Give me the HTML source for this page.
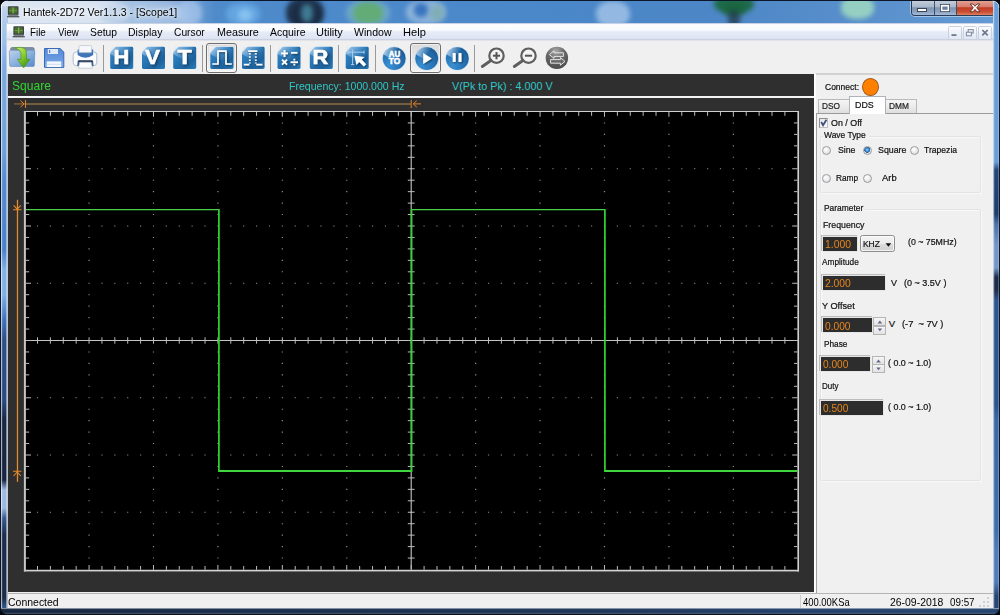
<!DOCTYPE html>
<html lang="en">
<head>
<meta charset="utf-8">
<title>Hantek-2D72 Ver1.1.3 - [Scope1]</title>
<style>
html,body{margin:0;padding:0;}
body{width:1000px;height:615px;overflow:hidden;position:relative;background:#4a7ab5;font-family:"Liberation Sans",sans-serif;}
.t{position:absolute;white-space:pre;transform-origin:0 50%;}
.abs{position:absolute;}
svg{position:absolute;left:0;top:0;overflow:visible;}

#win{position:absolute;left:0;top:0;width:1000px;height:615px;overflow:hidden;
 background:
  linear-gradient(90deg,#0d1a2c 0,#0d1a2c 1px,rgba(255,255,255,.75) 1px,rgba(255,255,255,.75) 2px,rgba(0,0,0,0) 2.5px) 0 0/8px 100% no-repeat,
  linear-gradient(90deg,#c3d3e6 0,#b4cbe6 90px,#8fb2dd 170px,#4f8bcb 215px,#4a88ca 520px,#4c86c6 700px,#5a90cc 880px,#649ad4 1000px);
}
#glassblobs{position:absolute;left:0;top:0;width:1000px;height:24px;overflow:hidden;}
#glassblobs i{position:absolute;display:block;border-radius:45%;filter:blur(2.6px);}
#titlebar{position:absolute;left:0;top:0;width:1000px;height:23px;}
#topline{position:absolute;left:0;top:0;width:1000px;height:1px;background:#0d1626;}
#topline2{position:absolute;left:6px;top:1px;width:988px;height:1px;background:rgba(255,255,255,.35);}
#lborder{position:absolute;left:0;top:6px;width:8px;height:609px;
 background:
  linear-gradient(90deg,#0c1626 0,#0c1626 .8px,rgba(255,255,255,.7) 1px,rgba(255,255,255,.55) 2px,rgba(255,255,255,0) 2.6px,rgba(255,255,255,0) 8px),
  linear-gradient(180deg,#c2d4e8 0,#b0cbea 14px,#9cc0ea 34px,#7eabe0 60px,#6fa0dc 144px,#558cd0 174px,#4a82ca 244px,#82b2e8 264px,#7fb0ea 289px,#4173bb 314px,#2d5088 334px,#2a4a80 394px,#182844 414px,#172640 474px,#9fbbe3 484px,#9cb8e0 502px,#3a5a90 512px,#1c2e4c 529px,#1b2c48 592px,#35609c 604px);}
#rborder{position:absolute;left:993px;top:0;width:7px;height:615px;
 background:
  linear-gradient(90deg,rgba(225,232,242,.95) 0,rgba(255,255,255,.35) 1px,rgba(255,255,255,0) 1.8px,rgba(255,255,255,0) 5px,rgba(255,255,255,.4) 5.8px,rgba(12,22,38,1) 6.4px,#0a1220 7px),
  linear-gradient(180deg,#6a9cd6 0,#6a9cd6 162px,#24467a 170px,#1e3c6c 214px,#4a70a8 224px,#7394c6 245px,#7394c6 268px,#1e2e4a 277px,#1e2e4a 290px,#2c548e 300px,#2c548e 405px,#3a68a6 420px,#3e6eae 530px,#4f7cb8 550px,#4f7cb8 582px,#284674 596px);}
#bborder{position:absolute;left:0;top:608px;width:1000px;height:7px;
 background:
  linear-gradient(180deg,rgba(200,208,220,.95) 0,rgba(255,255,255,.2) 1px,rgba(255,255,255,0) 1.6px,rgba(255,255,255,0) 4.4px,rgba(255,255,255,.3) 5.2px,#0b1424 6px,#070d18 7px),
  linear-gradient(90deg,#182840 0,#1b3050 300px,#1f3759 600px,#25426c 800px,#264670 1000px);}
#ledge{position:absolute;left:5.6px;top:23px;width:2.4px;height:585px;background:linear-gradient(90deg,rgba(255,255,255,.25) 0,rgba(215,220,228,.9) 1.2px,rgba(150,158,170,1) 2.4px);}
#cornerTL{position:absolute;left:0;top:0;width:8px;height:8px;background:radial-gradient(circle at 7.2px 7.2px,rgba(0,0,0,0) 0,rgba(0,0,0,0) 5.6px,rgba(255,255,255,.8) 6.1px,#0c1626 6.8px,#05080e 7.4px);}
#cornerTR{position:absolute;left:992px;top:0;width:8px;height:8px;background:radial-gradient(circle at .8px 7.2px,rgba(0,0,0,0) 0,rgba(0,0,0,0) 5.6px,rgba(255,255,255,.7) 6.1px,#0c1626 6.8px,#05080e 7.4px);}
#cornerBL{position:absolute;left:0;top:607px;width:8px;height:8px;background:radial-gradient(circle at 7.2px .8px,rgba(0,0,0,0) 0,rgba(0,0,0,0) 5.8px,#0c1626 6.6px,#05080e 7.4px);}
#cornerBR{position:absolute;left:992px;top:607px;width:8px;height:8px;background:radial-gradient(circle at .8px .8px,rgba(0,0,0,0) 0,rgba(0,0,0,0) 5.8px,#0c1626 6.6px,#05080e 7.4px);}
#client{position:absolute;left:8px;top:23px;width:985px;height:585px;background:#f0f0f0;}
#menubar{position:absolute;left:7px;top:23px;width:986px;height:17.6px;
 background:linear-gradient(180deg,#9fb4d0 0,#dfe6f1 .8px,#fdfdfe 1.6px,#f8fafd 7px,#e6ebf7 9px,#e0e6f5 14px,#dce2f1 15.8px,#c9cfdb 16.6px,#e4e6ea 17.6px);}
#menubar .mi{position:absolute;}
.capbtn{position:absolute;top:0;height:16px;box-sizing:border-box;}
#statusbar{position:absolute;left:8px;top:593px;width:985px;height:15px;background:#f0f0f0;border-top:1px solid #b4b4b4;box-sizing:border-box;}
.mdib{position:absolute;top:25.5px;width:14px;height:14px;box-sizing:border-box;border:1px solid #c9d0de;border-radius:1.5px;
 background:linear-gradient(180deg,#fbfcfe 0,#eef1f8 50%,#e2e7f3 100%);}

#toolbar{position:absolute;left:7px;top:40.5px;width:986px;height:33.5px;background:#f0f0f0;}
#toolbar .sep{position:absolute;top:4px;width:1px;height:27px;background:#9a9a9a;}
#toolbar .pressed{position:absolute;top:2.5px;height:29.5px;box-sizing:border-box;border:1px solid #6f6f6f;border-radius:3px;background:linear-gradient(180deg,#dcdcdc 0,#e8e8e8 60%,#f2f2f2 100%);box-shadow:inset 0 0 0 1px rgba(255,255,255,.5);}

#scope{position:absolute;left:8px;top:74px;width:806px;height:518px;background:#2f2f2f;overflow:hidden;}
#scopehead{position:absolute;left:0;top:0;width:807px;height:22px;}
#scopeline{position:absolute;left:0;top:22.3px;width:807px;height:2px;background:#f4f4f4;}

#panel{position:absolute;left:814px;top:74px;width:179px;height:519px;background:#f0f0f0;}
#panel .topl{position:absolute;left:2px;top:-0.8px;width:177px;height:1.5px;background:#d2d2d2;}
#panel .vsep{position:absolute;left:0;top:0;width:2.6px;height:100%;background:linear-gradient(90deg,#ffffff 0,#fcfcfc 1.4px,#f0f0f0 2.4px);}
#panel .t{-webkit-text-stroke:.22px currentColor;}
.tab{position:absolute;box-sizing:border-box;border:1px solid #b9b9b9;border-bottom:none;background:linear-gradient(180deg,#f4f4f4 0,#ececec 50%,#dedede 100%);}
.tab.sel{background:#fff;border-color:#aeb3bb;z-index:2;}
#tabbody{position:absolute;left:2px;top:39px;width:177px;height:480px;border-top:1px solid #9a9a9a;border-left:1px solid #a0a0a0;box-sizing:border-box;background:#f0f0f0;}
.grp{position:absolute;box-sizing:border-box;border:1px solid #e3e3e3;border-radius:2px;box-shadow:inset 1px 1px 0 #f8f8f8, 1px 1px 0 #f8f8f8;}
.dk{position:absolute;box-sizing:border-box;background:#2d2d2d;box-shadow:0 0 0 1px #e6e6e6,-1px -1px 0 1px #bdbdbd;}
.radio{position:absolute;width:9px;height:9px;border-radius:50%;box-sizing:border-box;border:1px solid #9a9da2;background:radial-gradient(circle at 40% 35%,#ffffff 0,#eeeeee 45%,#cfcfcf 100%);}
.radio.on{background:radial-gradient(circle at 45% 40%,#9fd4f5 0,#2b78c2 38%,#1f5ea3 48%,#e8e8e8 56%,#d8d8d8 100%);}
.spin{position:absolute;box-sizing:border-box;width:13px;border:1px solid #b5b5b5;background:linear-gradient(180deg,#f6f6f6,#e2e2e2);}
.combo{position:absolute;box-sizing:border-box;border:1px solid #8d8d8d;border-radius:2.5px;background:linear-gradient(180deg,#f4f4f4 0,#ebebeb 50%,#dcdcdc 52%,#d2d2d2 100%);box-shadow:inset 0 0 0 1px rgba(255,255,255,.7);}

</style>
</head>
<body>
<div id="win">
<div id="glassblobs"><i style="left:-10px;top:-4px;width:140px;height:34px;background:rgba(228,235,244,.75)"></i><i style="left:100px;top:2px;width:90px;height:26px;background:rgba(170,196,228,.55)"></i><i style="left:176px;top:0px;width:26px;height:26px;background:rgba(170,200,236,.7)"></i><i style="left:226px;top:3px;width:34px;height:22px;background:rgba(110,176,234,.7)"></i><i style="left:238px;top:9px;width:14px;height:12px;background:rgba(150,205,245,.7)"></i><i style="left:286px;top:-3px;width:38px;height:32px;background:rgba(26,42,64,.9)"></i><i style="left:292px;top:4px;width:28px;height:22px;background:rgba(26,42,64,.7)"></i><i style="left:301px;top:4px;width:12px;height:18px;background:rgba(74,140,166,.8)"></i><i style="left:346px;top:0px;width:44px;height:26px;background:rgba(140,196,200,.5)"></i><i style="left:353px;top:2px;width:30px;height:22px;background:rgba(98,172,104,.85)"></i><i style="left:406px;top:0px;width:40px;height:24px;background:rgba(170,198,226,.7)"></i><i style="left:414px;top:3px;width:14px;height:14px;background:rgba(40,104,186,.85)"></i><i style="left:430px;top:5px;width:14px;height:16px;background:rgba(120,170,160,.6)"></i><i style="left:596px;top:1px;width:34px;height:26px;background:rgba(165,198,234,.8)"></i><i style="left:714px;top:-5px;width:40px;height:18px;background:rgba(26,104,62,.9)"></i><i style="left:722px;top:2px;width:24px;height:14px;background:rgba(26,100,62,.8)"></i><i style="left:728px;top:10px;width:12px;height:18px;background:rgba(34,58,70,.75)"></i><i style="left:841px;top:-4px;width:33px;height:23px;background:rgba(160,218,194,.85)"></i></div>
<div id="titlebar"><span class="t" style="left:23.34px;top:7.00px;font-size:11.8px;line-height:11.8px;color:#000;transform:scaleX(0.8878);text-shadow:0 0 6px rgba(255,255,255,.95),0 0 10px rgba(255,255,255,.8),0 0 3px rgba(255,255,255,.6);">Hantek-2D72 Ver1.1.3 - [Scope1]</span>
<div class="abs" id="capbtns" style="left:911px;top:0;width:84px;height:16px;border:1px solid rgba(30,45,70,.85);border-top:none;border-radius:0 0 4px 4px;box-sizing:border-box;overflow:hidden;box-shadow:0 0 0 1px rgba(255,255,255,.45);">
 <div class="abs" style="left:0;top:0;width:22px;height:15px;background:linear-gradient(180deg,#c6d0de 0,#aab8cc 45%,#8194b0 52%,#8ea4c2 80%,#a4bad6 100%);border-right:1px solid rgba(40,55,80,.8);"></div>
 <div class="abs" style="left:23px;top:0;width:21px;height:15px;background:linear-gradient(180deg,#c6d0de 0,#aab8cc 45%,#8194b0 52%,#8ea4c2 80%,#a4bad6 100%);border-right:1px solid rgba(40,55,80,.8);"></div>
 <div class="abs" style="left:45px;top:0;width:38px;height:15px;background:linear-gradient(180deg,#e4a698 0,#d67c6c 45%,#c03c24 52%,#cc5034 80%,#dc8260 100%);"></div>
</div>
<svg width="1000" height="24" viewBox="0 0 1000 24">
 <rect x="917.5" y="8.5" width="9" height="3" fill="#fff" stroke="#3a4558" stroke-width="1"/>
 <rect x="940.5" y="4.5" width="9" height="7" fill="none" stroke="#3a4558" stroke-width="1"/>
 <rect x="941.5" y="5.5" width="7" height="5" fill="none" stroke="#fff" stroke-width="1.4"/>
 <rect x="943" y="7" width="4" height="2.4" fill="#6c7f9c"/>
 <path d="M970.2 4 L973 4 L975 6.3 L977 4 L979.8 4 L976.7 7.8 L980 11.8 L977 11.8 L975 9.4 L973 11.8 L970 11.8 L973.3 7.8 Z" fill="#fff" stroke="#5e2a22" stroke-width=".9" stroke-linejoin="round"/>
</svg>
</div>
<div id="topline"></div>
<div id="lborder"></div><div id="ledge"></div><div id="rborder"></div><div id="bborder"></div><div id="cornerTL"></div><div id="cornerTR"></div><div id="cornerBL"></div><div id="cornerBR"></div>
<div id="client"></div>
</div>
<svg width="1000" height="615" viewBox="0 0 1000 615"><g transform="translate(7.5,6)" filter="url(#soft)">
 <rect x="0.4" y="0.2" width="10.6" height="9" rx=".8" fill="#3d4144"/>
 <rect x="1.6" y="1.4" width="8.2" height="6" fill="#47702c"/>
 <rect x="5" y="1.4" width="1.2" height="6" fill="#86b450"/>
 <path d="M1.6 4.6 H9.8" stroke="#78a648" stroke-width=".7" fill="none"/>
 <rect x="0.8" y="8.4" width="9.8" height="1.4" fill="#6e7378"/>
 <rect x="-0.4" y="10.2" width="12.2" height="1.1" fill="#34383c"/>
 </g></svg>

<div id="menubar"><span class="t mi" style="left:23.39px;top:3.00px;font-size:11.6px;line-height:11.6px;color:#000;transform:scaleX(0.8476);">File</span><span class="t mi" style="left:50.86px;top:3.00px;font-size:11.6px;line-height:11.6px;color:#000;transform:scaleX(0.8320);">View</span><span class="t mi" style="left:83.43px;top:3.00px;font-size:11.6px;line-height:11.6px;color:#000;transform:scaleX(0.8908);">Setup</span><span class="t mi" style="left:121.34px;top:3.00px;font-size:11.6px;line-height:11.6px;color:#000;transform:scaleX(0.9066);">Display</span><span class="t mi" style="left:167.38px;top:3.00px;font-size:11.6px;line-height:11.6px;color:#000;transform:scaleX(0.8847);">Cursor</span><span class="t mi" style="left:209.62px;top:3.00px;font-size:11.6px;line-height:11.6px;color:#000;transform:scaleX(0.9275);">Measure</span><span class="t mi" style="left:262.98px;top:3.00px;font-size:11.6px;line-height:11.6px;color:#000;transform:scaleX(0.9022);">Acquire</span><span class="t mi" style="left:308.65px;top:3.00px;font-size:11.6px;line-height:11.6px;color:#000;transform:scaleX(0.9476);">Utility</span><span class="t mi" style="left:346.95px;top:3.00px;font-size:11.6px;line-height:11.6px;color:#000;transform:scaleX(0.9094);">Window</span><span class="t mi" style="left:395.59px;top:3.00px;font-size:11.6px;line-height:11.6px;color:#000;transform:scaleX(0.9590);">Help</span></div>
<svg width="1000" height="615" viewBox="0 0 1000 615"><g transform="translate(13,26)" filter="url(#soft)">
 <rect x="0.4" y="0.2" width="10.6" height="9" rx=".8" fill="#3d4144"/>
 <rect x="1.6" y="1.4" width="8.2" height="6" fill="#47702c"/>
 <rect x="5" y="1.4" width="1.2" height="6" fill="#86b450"/>
 <path d="M1.6 4.6 H9.8" stroke="#78a648" stroke-width=".7" fill="none"/>
 <rect x="0.8" y="8.4" width="9.8" height="1.4" fill="#6e7378"/>
 <rect x="-0.4" y="10.2" width="12.2" height="1.1" fill="#34383c"/>
 </g></svg>
<div class="mdib" style="left:947.5px"></div><div class="mdib" style="left:963px"></div><div class="mdib" style="left:978px"></div>
<svg width="1000" height="45" viewBox="0 0 1000 45">
 <rect x="951.5" y="34.2" width="5" height="1.8" fill="#6d7a92"/>
 <g fill="none" stroke="#8490a6" stroke-width="1.1"><rect x="968.2" y="29.6" width="5" height="3.4"/><rect x="966.4" y="32.2" width="5" height="3.6" fill="#eef1f8"/></g>
 <path d="M982.3 30 L987.7 35.4 M987.7 30 L982.3 35.4" stroke="#6a768e" stroke-width="1.7"/>
</svg>

<div id="toolbar"><div class="sep" style="left:96.0px"></div><div class="sep" style="left:195.0px"></div><div class="sep" style="left:263.0px"></div><div class="sep" style="left:330.9px"></div><div class="sep" style="left:367.9px"></div><div class="sep" style="left:467.1px"></div><div class="pressed" style="left:199px;width:30.5px"></div><div class="pressed" style="left:403px;width:30.6px"></div></div>
<svg width="1000" height="80" viewBox="0 0 1000 80"><defs>
 <filter id="soft" x="-10%" y="-10%" width="120%" height="120%"><feGaussianBlur stdDeviation=".45"/></filter>
 <filter id="tsh" x="-20%" y="-20%" width="140%" height="150%"><feGaussianBlur in="SourceAlpha" stdDeviation=".9" result="b"/><feOffset in="b" dx=".6" dy="1" result="o"/><feComponentTransfer in="o" result="s"><feFuncA type="linear" slope=".55"/></feComponentTransfer><feGaussianBlur in="SourceGraphic" stdDeviation=".3" result="g"/><feMerge><feMergeNode in="s"/><feMergeNode in="g"/></feMerge></filter>
 <linearGradient id="gsq" x1="0" y1="0" x2="1" y2="1"><stop offset="0" stop-color="#3f8cca"/><stop offset=".4" stop-color="#2876b6"/><stop offset=".72" stop-color="#1d629c"/><stop offset="1" stop-color="#2b7cbb"/></linearGradient>
 <linearGradient id="gglare" x1="0" y1="0" x2=".9" y2=".55"><stop offset="0" stop-color="#fff" stop-opacity=".85"/><stop offset=".3" stop-color="#dff0ff" stop-opacity=".45"/><stop offset=".75" stop-color="#bfe0ff" stop-opacity=".12"/><stop offset="1" stop-color="#fff" stop-opacity="0"/></linearGradient>
 <linearGradient id="gglare2" x1="0" y1="0" x2="1" y2=".35"><stop offset="0" stop-color="#fff" stop-opacity="1"/><stop offset=".35" stop-color="#e4f2ff" stop-opacity=".6"/><stop offset=".8" stop-color="#bfe0ff" stop-opacity=".1"/><stop offset="1" stop-color="#fff" stop-opacity="0"/></linearGradient>
 <radialGradient id="gcirc" cx=".3" cy=".8" r=".85"><stop offset="0" stop-color="#3a90d2"/><stop offset=".5" stop-color="#2876b8"/><stop offset="1" stop-color="#1c5c96"/></radialGradient>
 <radialGradient id="ggrey" cx=".45" cy=".2" r=".85"><stop offset="0" stop-color="#a8a8a8"/><stop offset=".45" stop-color="#686868"/><stop offset="1" stop-color="#484848"/></radialGradient>
 <linearGradient id="gfold" x1="0" y1="0" x2="0" y2="1"><stop offset="0" stop-color="#cfe0f2"/><stop offset="1" stop-color="#7fa9d8"/></linearGradient>
 <linearGradient id="gfold2" x1="0" y1="0" x2="1" y2="1"><stop offset="0" stop-color="#bfd2e8"/><stop offset=".45" stop-color="#8fb4e0"/><stop offset="1" stop-color="#5588cc"/></linearGradient>
 <linearGradient id="ggreen" x1="0" y1="0" x2=".7" y2="1"><stop offset="0" stop-color="#cdee7a"/><stop offset=".45" stop-color="#96d43a"/><stop offset="1" stop-color="#459a10"/></linearGradient>
 <linearGradient id="gflop" x1="0" y1="0" x2="0" y2="1"><stop offset="0" stop-color="#5488d6"/><stop offset=".6" stop-color="#6a9ce0"/><stop offset="1" stop-color="#8ab6ee"/></linearGradient>
</defs>
<g filter="url(#soft)">
 <path d="M10.6 49 Q10.6 47.5 12 47.5 L32.6 47.5 Q34.2 47.5 34.2 49 L34.2 55 L10.6 55 Z" fill="#7c8da6" stroke="#5f6f86" stroke-width=".6"/>
 <path d="M9.3 51.6 Q9.3 50.3 10.6 50.3 L33.5 50.3 Q34.8 50.3 34.8 51.6 L34.4 65.2 Q34.4 66.5 33.1 66.5 L11 66.5 Q9.7 66.5 9.7 65.2 Z" fill="url(#gfold2)" stroke="#6a8cb8" stroke-width=".6"/>
 <path d="M14.3 47.9 Q25.6 45.6 26.5 52 L26.5 59.3 L29.8 59.3 L23.6 67.8 L17.4 59.3 L21 59.3 L21 53.6 Q20.6 49.4 14.3 47.9 Z" fill="url(#ggreen)" stroke="#4a9416" stroke-width=".7"/>
 </g><g transform="translate(44,48)" filter="url(#soft)">
 <path d="M0.5 0.5 L16 0.5 L19.8 4 L19.8 19.4 L0.5 19.4 Z" fill="url(#gflop)" stroke="#3a69b4" stroke-width="1"/>
 <rect x="3.8" y="1" width="10.2" height="5" fill="#dfe9f8"/>
 <rect x="5" y="2" width="1.2" height="3" fill="#5a84c4"/>
 <rect x="2.8" y="13.4" width="14.4" height="5.6" fill="#f4f7fc"/>
 <rect x="2.8" y="15.8" width="14.4" height="1" fill="#cfdcf0"/>
 </g><g filter="url(#soft)">
 <rect x="73.2" y="51.8" width="23.6" height="14" rx="3.4" fill="#fbfcfe" stroke="#a9b6cc" stroke-width=".9"/>
 <path d="M77.6 49.4 L93.2 49.4 L93.2 55 Q85.4 60.6 77.6 55 Z" fill="#3f76b8"/>
 <rect x="79" y="45.6" width="12.6" height="7" rx=".8" fill="#f6f8fb" stroke="#b8c2d0" stroke-width=".7"/>
 <path d="M77.8 60.4 L93 60.4 L93.6 66 L77.2 66 Z" fill="#3d5a88"/>
 <path d="M78.4 60.4 L92.4 60.4 L92.4 62 L78.4 62 Z" fill="#26354c"/>
 <path d="M79.6 62.2 L91.2 62.2 L92.4 68.2 L78.4 68.2 Z" fill="#fbfcfd" stroke="#aab4c4" stroke-width=".6"/>
 </g><g transform="translate(110.2,46.8)"><rect x="0" y="0" width="23" height="22.2" rx="1.4" fill="url(#gsq)" filter="url(#soft)"/><path d="M-0.8 -0.8 L18.4 -0.8 L22.5 4.4 L11.5 13.8 L-0.8 6.7 Z" fill="url(#gglare)" filter="url(#soft)"/><path d="M-0.8 -0.8 L6 -0.8 L-0.8 6.4 Z" fill="#f0f0f0" opacity=".9" filter="url(#soft)"/></g><text x="0" y="0" transform="translate(121.5,64.2) scale(1.12,1)" text-anchor="middle" font-family="Liberation Sans, sans-serif" font-weight="bold" font-size="19.5" fill="#fff" stroke="#fff" stroke-width=".5" filter="url(#tsh)">H</text><g transform="translate(142,46.8)"><rect x="0" y="0" width="23" height="22.2" rx="1.4" fill="url(#gsq)" filter="url(#soft)"/><path d="M-0.8 -0.8 L18.4 -0.8 L22.5 4.4 L11.5 13.8 L-0.8 6.7 Z" fill="url(#gglare)" filter="url(#soft)"/><path d="M-0.8 -0.8 L6 -0.8 L-0.8 6.4 Z" fill="#f0f0f0" opacity=".9" filter="url(#soft)"/></g><text x="0" y="0" transform="translate(152.4,64.2) scale(1.15,1)" text-anchor="middle" font-family="Liberation Sans, sans-serif" font-weight="bold" font-size="19.5" fill="#fff" stroke="#fff" stroke-width=".5" filter="url(#tsh)">V</text><g transform="translate(173.2,46.8)"><rect x="0" y="0" width="23" height="22.2" rx="1.4" fill="url(#gsq)" filter="url(#soft)"/><path d="M-0.8 -0.8 L18.4 -0.8 L22.5 4.4 L11.5 13.8 L-0.8 6.7 Z" fill="url(#gglare)" filter="url(#soft)"/><path d="M-0.8 -0.8 L6 -0.8 L-0.8 6.4 Z" fill="#f0f0f0" opacity=".9" filter="url(#soft)"/></g><text x="0" y="0" transform="translate(184.6,64.2) scale(1.2,1)" text-anchor="middle" font-family="Liberation Sans, sans-serif" font-weight="bold" font-size="19.5" fill="#fff" stroke="#fff" stroke-width=".5" filter="url(#tsh)">T</text><g transform="translate(210.3,47)"><rect x="0" y="0" width="23.2" height="22" rx="1.4" fill="url(#gsq)" filter="url(#soft)"/><path d="M-0.8 -0.8 L18.6 -0.8 L22.7 4.4 L11.6 13.6 L-0.8 6.6 Z" fill="url(#gglare)" filter="url(#soft)"/><path d="M-0.8 -0.8 L6 -0.8 L-0.8 6.4 Z" fill="#f0f0f0" opacity=".9" filter="url(#soft)"/></g><path d="M212.3 64 L218 64 L218 51.2 L226 51.2 L226 64 L231.8 64" fill="none" stroke="#fff" stroke-width="1.7" filter="url(#tsh)"/><g transform="translate(242,46.8)"><rect x="0" y="0" width="22.6" height="22.2" rx="1.4" fill="url(#gsq)" filter="url(#soft)"/><path d="M-0.8 -0.8 L18.1 -0.8 L22.1 4.4 L11.3 13.8 L-0.8 6.7 Z" fill="url(#gglare)" filter="url(#soft)"/><path d="M-0.8 -0.8 L6 -0.8 L-0.8 6.4 Z" fill="#f0f0f0" opacity=".9" filter="url(#soft)"/></g><g filter="url(#tsh)" stroke="#fff" fill="none" transform="translate(-.2,-.5)"><path d="M244 65.2 L249.5 65.2 M256.5 65.2 L262.6 65.2 M248.4 51.6 L257.6 51.6" stroke-width="1.8"/><path d="M250 53.5 L250 64 M256 53.5 L256 64" stroke-width="1.8" stroke-dasharray="1.6 1.6"/></g><g transform="translate(277.5,46.8)"><rect x="0" y="0" width="23" height="22.2" rx="1.4" fill="url(#gsq)" filter="url(#soft)"/><path d="M-0.8 -0.8 L18.4 -0.8 L22.5 4.4 L11.5 13.8 L-0.8 6.7 Z" fill="url(#gglare)" filter="url(#soft)"/><path d="M-0.8 -0.8 L6 -0.8 L-0.8 6.4 Z" fill="#f0f0f0" opacity=".9" filter="url(#soft)"/></g><g filter="url(#tsh)" stroke="#fff" stroke-width="1.8" fill="none" transform="translate(0,-.6)"><path d="M281 54 L288 54 M284.5 50.5 L284.5 57.5"/><path d="M291 53.4 L297.5 53.4"/><path d="M282 60.2 L287 65.2 M287 60.2 L282 65.2"/><path d="M290.6 62.8 L298 62.8"/><path d="M294.3 59.4 v1.8 M294.3 64.4 v1.8"/></g><g transform="translate(309.8,46.8)"><rect x="0" y="0" width="23" height="22.2" rx="1.4" fill="url(#gsq)" filter="url(#soft)"/><path d="M-0.8 -0.8 L18.4 -0.8 L22.5 4.4 L11.5 13.8 L-0.8 6.7 Z" fill="url(#gglare)" filter="url(#soft)"/><path d="M-0.8 -0.8 L6 -0.8 L-0.8 6.4 Z" fill="#f0f0f0" opacity=".9" filter="url(#soft)"/></g><text x="0" y="0" transform="translate(320.4,64.2) scale(1.12,1)" text-anchor="middle" font-family="Liberation Sans, sans-serif" font-weight="bold" font-size="19.5" fill="#fff" stroke="#fff" stroke-width=".5" filter="url(#tsh)">R</text><g transform="translate(345.7,46.8)"><rect x="0" y="0" width="23" height="22.2" rx="1.4" fill="url(#gsq)" filter="url(#soft)"/><path d="M-0.8 -0.8 L18.4 -0.8 L22.5 4.4 L11.5 13.8 L-0.8 6.7 Z" fill="url(#gglare)" filter="url(#soft)"/><path d="M-0.8 -0.8 L6 -0.8 L-0.8 6.4 Z" fill="#f0f0f0" opacity=".9" filter="url(#soft)"/></g><g><path d="M348 52.2 L364 52.2 M352.6 49.6 L352.6 64.6" stroke="#a9d0ee" stroke-width="1" fill="none"/><path d="M348 50.6 L348 53.8 M364 50.6 L364 53.8 M351 64.6 L354.2 64.6" stroke="#a9d0ee" stroke-width="1"/><path d="M354.4 55.8 L364.6 57 L361.6 59.6 L366.2 64.2 L363.8 66.6 L359.2 62 L356.4 65 Z" fill="#fff" filter="url(#tsh)"/></g><g><clipPath id="cc1"><circle cx="394.2" cy="58.5" r="11.6"/></clipPath><circle cx="394.2" cy="58.5" r="11.6" fill="url(#gcirc)" filter="url(#soft)"/><g clip-path="url(#cc1)"><path d="M381.59999999999997 53.16 L390.72 58.73 L400.58 45.9 L381.59999999999997 45.9 Z" fill="url(#gglare2)" filter="url(#soft)"/></g><circle cx="394.2" cy="58.5" r="11.9" fill="none" stroke="#cfe4f6" stroke-width=".7" opacity=".7"/></g><g font-family="Liberation Sans, sans-serif" font-weight="bold" font-size="7.6" fill="#fff" stroke="#fff" stroke-width=".5" text-anchor="middle"><text transform="translate(394.5,56.8) scale(1,1.14)" textLength="11.4" lengthAdjust="spacingAndGlyphs">AU</text><text transform="translate(394.5,63.8) scale(1,1.1)" textLength="11.4" lengthAdjust="spacingAndGlyphs">TO</text></g><g><clipPath id="cc2"><circle cx="426.7" cy="58.5" r="11.6"/></clipPath><circle cx="426.7" cy="58.5" r="11.6" fill="url(#gcirc)" filter="url(#soft)"/><g clip-path="url(#cc2)"><path d="M414.09999999999997 53.16 L423.22 58.73 L433.08 45.9 L414.09999999999997 45.9 Z" fill="url(#gglare2)" filter="url(#soft)"/></g><circle cx="426.7" cy="58.5" r="11.9" fill="none" stroke="#cfe4f6" stroke-width=".7" opacity=".7"/></g><path d="M423.2 53 L431.8 58.5 L423.2 64 Z" fill="#fff" filter="url(#tsh)"/><g><clipPath id="cc3"><circle cx="457.3" cy="58.5" r="11.6"/></clipPath><circle cx="457.3" cy="58.5" r="11.6" fill="url(#gcirc)" filter="url(#soft)"/><g clip-path="url(#cc3)"><path d="M444.7 53.16 L453.82 58.73 L463.68 45.9 L444.7 45.9 Z" fill="url(#gglare2)" filter="url(#soft)"/></g><circle cx="457.3" cy="58.5" r="11.9" fill="none" stroke="#cfe4f6" stroke-width=".7" opacity=".7"/></g><g fill="#fff" filter="url(#tsh)"><rect x="452.7" y="53" width="3" height="9" rx=".6"/><rect x="458.5" y="53" width="3" height="9" rx=".6"/></g><g filter="url(#soft)"><circle cx="496.5" cy="55.7" r="7.2" fill="#f4f4f4" stroke="#5e5e5e" stroke-width="2.2"/><path d="M490.9 60.4 L482.3 66.4" stroke="#5e5e5e" stroke-width="3" stroke-linecap="round"/><path d="M492.9 55.7 L500.1 55.7" stroke="#555" stroke-width="2"/><path d="M496.5 52.1 L496.5 59.3" stroke="#555" stroke-width="2"/></g><g filter="url(#soft)"><circle cx="528.5" cy="55.7" r="7.2" fill="#f4f4f4" stroke="#5e5e5e" stroke-width="2.2"/><path d="M522.9 60.4 L514.3 66.4" stroke="#5e5e5e" stroke-width="3" stroke-linecap="round"/><path d="M524.9 55.7 L532.1 55.7" stroke="#555" stroke-width="2"/></g><g filter="url(#soft)"><circle cx="556.9" cy="57.9" r="11.2" fill="url(#ggrey)"/><path d="M549.4 54.6 L554 50.8 L554 52.8 L563.4 52.8 L563.4 56.4 L554 56.4 L554 58.4 Z" fill="none" stroke="#f0f0f0" stroke-width=".9"/><path d="M565 61.4 L560.4 65.2 L560.4 63.2 L550.6 63.2 L550.6 59.6 L560.4 59.6 L560.4 57.6 Z" fill="#6a6a6a" stroke="#f0f0f0" stroke-width=".9"/></g>
</svg>
<div id="scope"><div id="scopehead"><span class="t" style="left:3.85px;top:6.00px;font-size:12.2px;line-height:12.2px;color:#30d630;transform:scaleX(0.9884);">Square</span><span class="t" style="left:281.13px;top:7.00px;font-size:10.8px;line-height:10.8px;color:#2ec8c8;transform:scaleX(0.9773);">Frequency: 1000.000 Hz</span><span class="t" style="left:443.95px;top:7.00px;font-size:10.8px;line-height:10.8px;color:#2ec8c8;">V(Pk to Pk) : 4.000 V</span></div><div id="scopeline"></div>
<svg width="807" height="518" viewBox="8 74 807 518"><rect x="24" y="111" width="775" height="460.5" fill="#000"/><path d="M36.91 168.75h1.2M49.79 168.75h1.2M62.68 168.75h1.2M75.56 168.75h1.2M88.45 168.75h1.2M101.34 168.75h1.2M114.22 168.75h1.2M127.11 168.75h1.2M139.99 168.75h1.2M152.88 168.75h1.2M165.77 168.75h1.2M178.65 168.75h1.2M191.54 168.75h1.2M204.42 168.75h1.2M217.31 168.75h1.2M230.20 168.75h1.2M243.08 168.75h1.2M255.97 168.75h1.2M268.85 168.75h1.2M281.74 168.75h1.2M294.63 168.75h1.2M307.51 168.75h1.2M320.40 168.75h1.2M333.28 168.75h1.2M346.17 168.75h1.2M359.06 168.75h1.2M371.94 168.75h1.2M384.83 168.75h1.2M397.71 168.75h1.2M410.60 168.75h1.2M423.49 168.75h1.2M436.37 168.75h1.2M449.26 168.75h1.2M462.14 168.75h1.2M475.03 168.75h1.2M487.92 168.75h1.2M500.80 168.75h1.2M513.69 168.75h1.2M526.57 168.75h1.2M539.46 168.75h1.2M552.35 168.75h1.2M565.23 168.75h1.2M578.12 168.75h1.2M591.00 168.75h1.2M603.89 168.75h1.2M616.78 168.75h1.2M629.66 168.75h1.2M642.55 168.75h1.2M655.43 168.75h1.2M668.32 168.75h1.2M681.21 168.75h1.2M694.09 168.75h1.2M706.98 168.75h1.2M719.86 168.75h1.2M732.75 168.75h1.2M745.64 168.75h1.2M758.52 168.75h1.2M771.41 168.75h1.2M784.29 168.75h1.2M36.91 226.00h1.2M49.79 226.00h1.2M62.68 226.00h1.2M75.56 226.00h1.2M88.45 226.00h1.2M101.34 226.00h1.2M114.22 226.00h1.2M127.11 226.00h1.2M139.99 226.00h1.2M152.88 226.00h1.2M165.77 226.00h1.2M178.65 226.00h1.2M191.54 226.00h1.2M204.42 226.00h1.2M217.31 226.00h1.2M230.20 226.00h1.2M243.08 226.00h1.2M255.97 226.00h1.2M268.85 226.00h1.2M281.74 226.00h1.2M294.63 226.00h1.2M307.51 226.00h1.2M320.40 226.00h1.2M333.28 226.00h1.2M346.17 226.00h1.2M359.06 226.00h1.2M371.94 226.00h1.2M384.83 226.00h1.2M397.71 226.00h1.2M410.60 226.00h1.2M423.49 226.00h1.2M436.37 226.00h1.2M449.26 226.00h1.2M462.14 226.00h1.2M475.03 226.00h1.2M487.92 226.00h1.2M500.80 226.00h1.2M513.69 226.00h1.2M526.57 226.00h1.2M539.46 226.00h1.2M552.35 226.00h1.2M565.23 226.00h1.2M578.12 226.00h1.2M591.00 226.00h1.2M603.89 226.00h1.2M616.78 226.00h1.2M629.66 226.00h1.2M642.55 226.00h1.2M655.43 226.00h1.2M668.32 226.00h1.2M681.21 226.00h1.2M694.09 226.00h1.2M706.98 226.00h1.2M719.86 226.00h1.2M732.75 226.00h1.2M745.64 226.00h1.2M758.52 226.00h1.2M771.41 226.00h1.2M784.29 226.00h1.2M36.91 283.25h1.2M49.79 283.25h1.2M62.68 283.25h1.2M75.56 283.25h1.2M88.45 283.25h1.2M101.34 283.25h1.2M114.22 283.25h1.2M127.11 283.25h1.2M139.99 283.25h1.2M152.88 283.25h1.2M165.77 283.25h1.2M178.65 283.25h1.2M191.54 283.25h1.2M204.42 283.25h1.2M217.31 283.25h1.2M230.20 283.25h1.2M243.08 283.25h1.2M255.97 283.25h1.2M268.85 283.25h1.2M281.74 283.25h1.2M294.63 283.25h1.2M307.51 283.25h1.2M320.40 283.25h1.2M333.28 283.25h1.2M346.17 283.25h1.2M359.06 283.25h1.2M371.94 283.25h1.2M384.83 283.25h1.2M397.71 283.25h1.2M410.60 283.25h1.2M423.49 283.25h1.2M436.37 283.25h1.2M449.26 283.25h1.2M462.14 283.25h1.2M475.03 283.25h1.2M487.92 283.25h1.2M500.80 283.25h1.2M513.69 283.25h1.2M526.57 283.25h1.2M539.46 283.25h1.2M552.35 283.25h1.2M565.23 283.25h1.2M578.12 283.25h1.2M591.00 283.25h1.2M603.89 283.25h1.2M616.78 283.25h1.2M629.66 283.25h1.2M642.55 283.25h1.2M655.43 283.25h1.2M668.32 283.25h1.2M681.21 283.25h1.2M694.09 283.25h1.2M706.98 283.25h1.2M719.86 283.25h1.2M732.75 283.25h1.2M745.64 283.25h1.2M758.52 283.25h1.2M771.41 283.25h1.2M784.29 283.25h1.2M36.91 397.75h1.2M49.79 397.75h1.2M62.68 397.75h1.2M75.56 397.75h1.2M88.45 397.75h1.2M101.34 397.75h1.2M114.22 397.75h1.2M127.11 397.75h1.2M139.99 397.75h1.2M152.88 397.75h1.2M165.77 397.75h1.2M178.65 397.75h1.2M191.54 397.75h1.2M204.42 397.75h1.2M217.31 397.75h1.2M230.20 397.75h1.2M243.08 397.75h1.2M255.97 397.75h1.2M268.85 397.75h1.2M281.74 397.75h1.2M294.63 397.75h1.2M307.51 397.75h1.2M320.40 397.75h1.2M333.28 397.75h1.2M346.17 397.75h1.2M359.06 397.75h1.2M371.94 397.75h1.2M384.83 397.75h1.2M397.71 397.75h1.2M410.60 397.75h1.2M423.49 397.75h1.2M436.37 397.75h1.2M449.26 397.75h1.2M462.14 397.75h1.2M475.03 397.75h1.2M487.92 397.75h1.2M500.80 397.75h1.2M513.69 397.75h1.2M526.57 397.75h1.2M539.46 397.75h1.2M552.35 397.75h1.2M565.23 397.75h1.2M578.12 397.75h1.2M591.00 397.75h1.2M603.89 397.75h1.2M616.78 397.75h1.2M629.66 397.75h1.2M642.55 397.75h1.2M655.43 397.75h1.2M668.32 397.75h1.2M681.21 397.75h1.2M694.09 397.75h1.2M706.98 397.75h1.2M719.86 397.75h1.2M732.75 397.75h1.2M745.64 397.75h1.2M758.52 397.75h1.2M771.41 397.75h1.2M784.29 397.75h1.2M36.91 455.00h1.2M49.79 455.00h1.2M62.68 455.00h1.2M75.56 455.00h1.2M88.45 455.00h1.2M101.34 455.00h1.2M114.22 455.00h1.2M127.11 455.00h1.2M139.99 455.00h1.2M152.88 455.00h1.2M165.77 455.00h1.2M178.65 455.00h1.2M191.54 455.00h1.2M204.42 455.00h1.2M217.31 455.00h1.2M230.20 455.00h1.2M243.08 455.00h1.2M255.97 455.00h1.2M268.85 455.00h1.2M281.74 455.00h1.2M294.63 455.00h1.2M307.51 455.00h1.2M320.40 455.00h1.2M333.28 455.00h1.2M346.17 455.00h1.2M359.06 455.00h1.2M371.94 455.00h1.2M384.83 455.00h1.2M397.71 455.00h1.2M410.60 455.00h1.2M423.49 455.00h1.2M436.37 455.00h1.2M449.26 455.00h1.2M462.14 455.00h1.2M475.03 455.00h1.2M487.92 455.00h1.2M500.80 455.00h1.2M513.69 455.00h1.2M526.57 455.00h1.2M539.46 455.00h1.2M552.35 455.00h1.2M565.23 455.00h1.2M578.12 455.00h1.2M591.00 455.00h1.2M603.89 455.00h1.2M616.78 455.00h1.2M629.66 455.00h1.2M642.55 455.00h1.2M655.43 455.00h1.2M668.32 455.00h1.2M681.21 455.00h1.2M694.09 455.00h1.2M706.98 455.00h1.2M719.86 455.00h1.2M732.75 455.00h1.2M745.64 455.00h1.2M758.52 455.00h1.2M771.41 455.00h1.2M784.29 455.00h1.2M36.91 512.25h1.2M49.79 512.25h1.2M62.68 512.25h1.2M75.56 512.25h1.2M88.45 512.25h1.2M101.34 512.25h1.2M114.22 512.25h1.2M127.11 512.25h1.2M139.99 512.25h1.2M152.88 512.25h1.2M165.77 512.25h1.2M178.65 512.25h1.2M191.54 512.25h1.2M204.42 512.25h1.2M217.31 512.25h1.2M230.20 512.25h1.2M243.08 512.25h1.2M255.97 512.25h1.2M268.85 512.25h1.2M281.74 512.25h1.2M294.63 512.25h1.2M307.51 512.25h1.2M320.40 512.25h1.2M333.28 512.25h1.2M346.17 512.25h1.2M359.06 512.25h1.2M371.94 512.25h1.2M384.83 512.25h1.2M397.71 512.25h1.2M410.60 512.25h1.2M423.49 512.25h1.2M436.37 512.25h1.2M449.26 512.25h1.2M462.14 512.25h1.2M475.03 512.25h1.2M487.92 512.25h1.2M500.80 512.25h1.2M513.69 512.25h1.2M526.57 512.25h1.2M539.46 512.25h1.2M552.35 512.25h1.2M565.23 512.25h1.2M578.12 512.25h1.2M591.00 512.25h1.2M603.89 512.25h1.2M616.78 512.25h1.2M629.66 512.25h1.2M642.55 512.25h1.2M655.43 512.25h1.2M668.32 512.25h1.2M681.21 512.25h1.2M694.09 512.25h1.2M706.98 512.25h1.2M719.86 512.25h1.2M732.75 512.25h1.2M745.64 512.25h1.2M758.52 512.25h1.2M771.41 512.25h1.2M784.29 512.25h1.2M88.45 122.95h1.2M88.45 134.40h1.2M88.45 145.85h1.2M88.45 157.30h1.2M88.45 180.20h1.2M88.45 191.65h1.2M88.45 203.10h1.2M88.45 214.55h1.2M88.45 237.45h1.2M88.45 248.90h1.2M88.45 260.35h1.2M88.45 271.80h1.2M88.45 294.70h1.2M88.45 306.15h1.2M88.45 317.60h1.2M88.45 329.05h1.2M88.45 351.95h1.2M88.45 363.40h1.2M88.45 374.85h1.2M88.45 386.30h1.2M88.45 409.20h1.2M88.45 420.65h1.2M88.45 432.10h1.2M88.45 443.55h1.2M88.45 466.45h1.2M88.45 477.90h1.2M88.45 489.35h1.2M88.45 500.80h1.2M88.45 523.70h1.2M88.45 535.15h1.2M88.45 546.60h1.2M88.45 558.05h1.2M152.88 122.95h1.2M152.88 134.40h1.2M152.88 145.85h1.2M152.88 157.30h1.2M152.88 180.20h1.2M152.88 191.65h1.2M152.88 203.10h1.2M152.88 214.55h1.2M152.88 237.45h1.2M152.88 248.90h1.2M152.88 260.35h1.2M152.88 271.80h1.2M152.88 294.70h1.2M152.88 306.15h1.2M152.88 317.60h1.2M152.88 329.05h1.2M152.88 351.95h1.2M152.88 363.40h1.2M152.88 374.85h1.2M152.88 386.30h1.2M152.88 409.20h1.2M152.88 420.65h1.2M152.88 432.10h1.2M152.88 443.55h1.2M152.88 466.45h1.2M152.88 477.90h1.2M152.88 489.35h1.2M152.88 500.80h1.2M152.88 523.70h1.2M152.88 535.15h1.2M152.88 546.60h1.2M152.88 558.05h1.2M217.31 122.95h1.2M217.31 134.40h1.2M217.31 145.85h1.2M217.31 157.30h1.2M217.31 180.20h1.2M217.31 191.65h1.2M217.31 203.10h1.2M217.31 214.55h1.2M217.31 237.45h1.2M217.31 248.90h1.2M217.31 260.35h1.2M217.31 271.80h1.2M217.31 294.70h1.2M217.31 306.15h1.2M217.31 317.60h1.2M217.31 329.05h1.2M217.31 351.95h1.2M217.31 363.40h1.2M217.31 374.85h1.2M217.31 386.30h1.2M217.31 409.20h1.2M217.31 420.65h1.2M217.31 432.10h1.2M217.31 443.55h1.2M217.31 466.45h1.2M217.31 477.90h1.2M217.31 489.35h1.2M217.31 500.80h1.2M217.31 523.70h1.2M217.31 535.15h1.2M217.31 546.60h1.2M217.31 558.05h1.2M281.74 122.95h1.2M281.74 134.40h1.2M281.74 145.85h1.2M281.74 157.30h1.2M281.74 180.20h1.2M281.74 191.65h1.2M281.74 203.10h1.2M281.74 214.55h1.2M281.74 237.45h1.2M281.74 248.90h1.2M281.74 260.35h1.2M281.74 271.80h1.2M281.74 294.70h1.2M281.74 306.15h1.2M281.74 317.60h1.2M281.74 329.05h1.2M281.74 351.95h1.2M281.74 363.40h1.2M281.74 374.85h1.2M281.74 386.30h1.2M281.74 409.20h1.2M281.74 420.65h1.2M281.74 432.10h1.2M281.74 443.55h1.2M281.74 466.45h1.2M281.74 477.90h1.2M281.74 489.35h1.2M281.74 500.80h1.2M281.74 523.70h1.2M281.74 535.15h1.2M281.74 546.60h1.2M281.74 558.05h1.2M346.17 122.95h1.2M346.17 134.40h1.2M346.17 145.85h1.2M346.17 157.30h1.2M346.17 180.20h1.2M346.17 191.65h1.2M346.17 203.10h1.2M346.17 214.55h1.2M346.17 237.45h1.2M346.17 248.90h1.2M346.17 260.35h1.2M346.17 271.80h1.2M346.17 294.70h1.2M346.17 306.15h1.2M346.17 317.60h1.2M346.17 329.05h1.2M346.17 351.95h1.2M346.17 363.40h1.2M346.17 374.85h1.2M346.17 386.30h1.2M346.17 409.20h1.2M346.17 420.65h1.2M346.17 432.10h1.2M346.17 443.55h1.2M346.17 466.45h1.2M346.17 477.90h1.2M346.17 489.35h1.2M346.17 500.80h1.2M346.17 523.70h1.2M346.17 535.15h1.2M346.17 546.60h1.2M346.17 558.05h1.2M475.03 122.95h1.2M475.03 134.40h1.2M475.03 145.85h1.2M475.03 157.30h1.2M475.03 180.20h1.2M475.03 191.65h1.2M475.03 203.10h1.2M475.03 214.55h1.2M475.03 237.45h1.2M475.03 248.90h1.2M475.03 260.35h1.2M475.03 271.80h1.2M475.03 294.70h1.2M475.03 306.15h1.2M475.03 317.60h1.2M475.03 329.05h1.2M475.03 351.95h1.2M475.03 363.40h1.2M475.03 374.85h1.2M475.03 386.30h1.2M475.03 409.20h1.2M475.03 420.65h1.2M475.03 432.10h1.2M475.03 443.55h1.2M475.03 466.45h1.2M475.03 477.90h1.2M475.03 489.35h1.2M475.03 500.80h1.2M475.03 523.70h1.2M475.03 535.15h1.2M475.03 546.60h1.2M475.03 558.05h1.2M539.46 122.95h1.2M539.46 134.40h1.2M539.46 145.85h1.2M539.46 157.30h1.2M539.46 180.20h1.2M539.46 191.65h1.2M539.46 203.10h1.2M539.46 214.55h1.2M539.46 237.45h1.2M539.46 248.90h1.2M539.46 260.35h1.2M539.46 271.80h1.2M539.46 294.70h1.2M539.46 306.15h1.2M539.46 317.60h1.2M539.46 329.05h1.2M539.46 351.95h1.2M539.46 363.40h1.2M539.46 374.85h1.2M539.46 386.30h1.2M539.46 409.20h1.2M539.46 420.65h1.2M539.46 432.10h1.2M539.46 443.55h1.2M539.46 466.45h1.2M539.46 477.90h1.2M539.46 489.35h1.2M539.46 500.80h1.2M539.46 523.70h1.2M539.46 535.15h1.2M539.46 546.60h1.2M539.46 558.05h1.2M603.89 122.95h1.2M603.89 134.40h1.2M603.89 145.85h1.2M603.89 157.30h1.2M603.89 180.20h1.2M603.89 191.65h1.2M603.89 203.10h1.2M603.89 214.55h1.2M603.89 237.45h1.2M603.89 248.90h1.2M603.89 260.35h1.2M603.89 271.80h1.2M603.89 294.70h1.2M603.89 306.15h1.2M603.89 317.60h1.2M603.89 329.05h1.2M603.89 351.95h1.2M603.89 363.40h1.2M603.89 374.85h1.2M603.89 386.30h1.2M603.89 409.20h1.2M603.89 420.65h1.2M603.89 432.10h1.2M603.89 443.55h1.2M603.89 466.45h1.2M603.89 477.90h1.2M603.89 489.35h1.2M603.89 500.80h1.2M603.89 523.70h1.2M603.89 535.15h1.2M603.89 546.60h1.2M603.89 558.05h1.2M668.32 122.95h1.2M668.32 134.40h1.2M668.32 145.85h1.2M668.32 157.30h1.2M668.32 180.20h1.2M668.32 191.65h1.2M668.32 203.10h1.2M668.32 214.55h1.2M668.32 237.45h1.2M668.32 248.90h1.2M668.32 260.35h1.2M668.32 271.80h1.2M668.32 294.70h1.2M668.32 306.15h1.2M668.32 317.60h1.2M668.32 329.05h1.2M668.32 351.95h1.2M668.32 363.40h1.2M668.32 374.85h1.2M668.32 386.30h1.2M668.32 409.20h1.2M668.32 420.65h1.2M668.32 432.10h1.2M668.32 443.55h1.2M668.32 466.45h1.2M668.32 477.90h1.2M668.32 489.35h1.2M668.32 500.80h1.2M668.32 523.70h1.2M668.32 535.15h1.2M668.32 546.60h1.2M668.32 558.05h1.2M732.75 122.95h1.2M732.75 134.40h1.2M732.75 145.85h1.2M732.75 157.30h1.2M732.75 180.20h1.2M732.75 191.65h1.2M732.75 203.10h1.2M732.75 214.55h1.2M732.75 237.45h1.2M732.75 248.90h1.2M732.75 260.35h1.2M732.75 271.80h1.2M732.75 294.70h1.2M732.75 306.15h1.2M732.75 317.60h1.2M732.75 329.05h1.2M732.75 351.95h1.2M732.75 363.40h1.2M732.75 374.85h1.2M732.75 386.30h1.2M732.75 409.20h1.2M732.75 420.65h1.2M732.75 432.10h1.2M732.75 443.55h1.2M732.75 466.45h1.2M732.75 477.90h1.2M732.75 489.35h1.2M732.75 500.80h1.2M732.75 523.70h1.2M732.75 535.15h1.2M732.75 546.60h1.2M732.75 558.05h1.2" stroke="#8e8e8e" stroke-width="1.1" fill="none"/><path d="M24.619999999999948 340.5H797.78M411.2 111.5V569.5" stroke="#c4c4c4" stroke-width="1.1" fill="none"/><path d="M37.51 337.3v6.4M37.51 112v3.8M37.51 569.8v-3.8M50.39 337.3v6.4M50.39 112v3.8M50.39 569.8v-3.8M63.28 337.3v6.4M63.28 112v3.8M63.28 569.8v-3.8M76.16 337.3v6.4M76.16 112v3.8M76.16 569.8v-3.8M89.05 337.3v6.4M89.05 112v4.8M89.05 569.8v-4.8M101.94 337.3v6.4M101.94 112v3.8M101.94 569.8v-3.8M114.82 337.3v6.4M114.82 112v3.8M114.82 569.8v-3.8M127.71 337.3v6.4M127.71 112v3.8M127.71 569.8v-3.8M140.59 337.3v6.4M140.59 112v3.8M140.59 569.8v-3.8M153.48 337.3v6.4M153.48 112v4.8M153.48 569.8v-4.8M166.37 337.3v6.4M166.37 112v3.8M166.37 569.8v-3.8M179.25 337.3v6.4M179.25 112v3.8M179.25 569.8v-3.8M192.14 337.3v6.4M192.14 112v3.8M192.14 569.8v-3.8M205.02 337.3v6.4M205.02 112v3.8M205.02 569.8v-3.8M217.91 337.3v6.4M217.91 112v4.8M217.91 569.8v-4.8M230.80 337.3v6.4M230.80 112v3.8M230.80 569.8v-3.8M243.68 337.3v6.4M243.68 112v3.8M243.68 569.8v-3.8M256.57 337.3v6.4M256.57 112v3.8M256.57 569.8v-3.8M269.45 337.3v6.4M269.45 112v3.8M269.45 569.8v-3.8M282.34 337.3v6.4M282.34 112v4.8M282.34 569.8v-4.8M295.23 337.3v6.4M295.23 112v3.8M295.23 569.8v-3.8M308.11 337.3v6.4M308.11 112v3.8M308.11 569.8v-3.8M321.00 337.3v6.4M321.00 112v3.8M321.00 569.8v-3.8M333.88 337.3v6.4M333.88 112v3.8M333.88 569.8v-3.8M346.77 337.3v6.4M346.77 112v4.8M346.77 569.8v-4.8M359.66 337.3v6.4M359.66 112v3.8M359.66 569.8v-3.8M372.54 337.3v6.4M372.54 112v3.8M372.54 569.8v-3.8M385.43 337.3v6.4M385.43 112v3.8M385.43 569.8v-3.8M398.31 337.3v6.4M398.31 112v3.8M398.31 569.8v-3.8M411.20 337.3v6.4M411.20 112v4.8M411.20 569.8v-4.8M424.09 337.3v6.4M424.09 112v3.8M424.09 569.8v-3.8M436.97 337.3v6.4M436.97 112v3.8M436.97 569.8v-3.8M449.86 337.3v6.4M449.86 112v3.8M449.86 569.8v-3.8M462.74 337.3v6.4M462.74 112v3.8M462.74 569.8v-3.8M475.63 337.3v6.4M475.63 112v4.8M475.63 569.8v-4.8M488.52 337.3v6.4M488.52 112v3.8M488.52 569.8v-3.8M501.40 337.3v6.4M501.40 112v3.8M501.40 569.8v-3.8M514.29 337.3v6.4M514.29 112v3.8M514.29 569.8v-3.8M527.17 337.3v6.4M527.17 112v3.8M527.17 569.8v-3.8M540.06 337.3v6.4M540.06 112v4.8M540.06 569.8v-4.8M552.95 337.3v6.4M552.95 112v3.8M552.95 569.8v-3.8M565.83 337.3v6.4M565.83 112v3.8M565.83 569.8v-3.8M578.72 337.3v6.4M578.72 112v3.8M578.72 569.8v-3.8M591.60 337.3v6.4M591.60 112v3.8M591.60 569.8v-3.8M604.49 337.3v6.4M604.49 112v4.8M604.49 569.8v-4.8M617.38 337.3v6.4M617.38 112v3.8M617.38 569.8v-3.8M630.26 337.3v6.4M630.26 112v3.8M630.26 569.8v-3.8M643.15 337.3v6.4M643.15 112v3.8M643.15 569.8v-3.8M656.03 337.3v6.4M656.03 112v3.8M656.03 569.8v-3.8M668.92 337.3v6.4M668.92 112v4.8M668.92 569.8v-4.8M681.81 337.3v6.4M681.81 112v3.8M681.81 569.8v-3.8M694.69 337.3v6.4M694.69 112v3.8M694.69 569.8v-3.8M707.58 337.3v6.4M707.58 112v3.8M707.58 569.8v-3.8M720.46 337.3v6.4M720.46 112v3.8M720.46 569.8v-3.8M733.35 337.3v6.4M733.35 112v4.8M733.35 569.8v-4.8M746.24 337.3v6.4M746.24 112v3.8M746.24 569.8v-3.8M759.12 337.3v6.4M759.12 112v3.8M759.12 569.8v-3.8M772.01 337.3v6.4M772.01 112v3.8M772.01 569.8v-3.8M784.89 337.3v6.4M784.89 112v3.8M784.89 569.8v-3.8M407.8 122.95h6.8M25.8 122.95h3.4M797.4 122.95h-3.4M407.8 134.40h6.8M25.8 134.40h3.4M797.4 134.40h-3.4M407.8 145.85h6.8M25.8 145.85h3.4M797.4 145.85h-3.4M407.8 157.30h6.8M25.8 157.30h3.4M797.4 157.30h-3.4M407.8 168.75h6.8M25.8 168.75h5.2M797.4 168.75h-5.2M407.8 180.20h6.8M25.8 180.20h3.4M797.4 180.20h-3.4M407.8 191.65h6.8M25.8 191.65h3.4M797.4 191.65h-3.4M407.8 203.10h6.8M25.8 203.10h3.4M797.4 203.10h-3.4M407.8 214.55h6.8M25.8 214.55h3.4M797.4 214.55h-3.4M407.8 226.00h6.8M25.8 226.00h5.2M797.4 226.00h-5.2M407.8 237.45h6.8M25.8 237.45h3.4M797.4 237.45h-3.4M407.8 248.90h6.8M25.8 248.90h3.4M797.4 248.90h-3.4M407.8 260.35h6.8M25.8 260.35h3.4M797.4 260.35h-3.4M407.8 271.80h6.8M25.8 271.80h3.4M797.4 271.80h-3.4M407.8 283.25h6.8M25.8 283.25h5.2M797.4 283.25h-5.2M407.8 294.70h6.8M25.8 294.70h3.4M797.4 294.70h-3.4M407.8 306.15h6.8M25.8 306.15h3.4M797.4 306.15h-3.4M407.8 317.60h6.8M25.8 317.60h3.4M797.4 317.60h-3.4M407.8 329.05h6.8M25.8 329.05h3.4M797.4 329.05h-3.4M407.8 340.50h6.8M25.8 340.50h5.2M797.4 340.50h-5.2M407.8 351.95h6.8M25.8 351.95h3.4M797.4 351.95h-3.4M407.8 363.40h6.8M25.8 363.40h3.4M797.4 363.40h-3.4M407.8 374.85h6.8M25.8 374.85h3.4M797.4 374.85h-3.4M407.8 386.30h6.8M25.8 386.30h3.4M797.4 386.30h-3.4M407.8 397.75h6.8M25.8 397.75h5.2M797.4 397.75h-5.2M407.8 409.20h6.8M25.8 409.20h3.4M797.4 409.20h-3.4M407.8 420.65h6.8M25.8 420.65h3.4M797.4 420.65h-3.4M407.8 432.10h6.8M25.8 432.10h3.4M797.4 432.10h-3.4M407.8 443.55h6.8M25.8 443.55h3.4M797.4 443.55h-3.4M407.8 455.00h6.8M25.8 455.00h5.2M797.4 455.00h-5.2M407.8 466.45h6.8M25.8 466.45h3.4M797.4 466.45h-3.4M407.8 477.90h6.8M25.8 477.90h3.4M797.4 477.90h-3.4M407.8 489.35h6.8M25.8 489.35h3.4M797.4 489.35h-3.4M407.8 500.80h6.8M25.8 500.80h3.4M797.4 500.80h-3.4M407.8 512.25h6.8M25.8 512.25h5.2M797.4 512.25h-5.2M407.8 523.70h6.8M25.8 523.70h3.4M797.4 523.70h-3.4M407.8 535.15h6.8M25.8 535.15h3.4M797.4 535.15h-3.4M407.8 546.60h6.8M25.8 546.60h3.4M797.4 546.60h-3.4M407.8 558.05h6.8M25.8 558.05h3.4M797.4 558.05h-3.4" stroke="#bdbdbd" stroke-width="1" fill="none"/><path d="M23.9 111.5H799" stroke="#cfcfcf" stroke-width="1.2"/><path d="M23.9 570.6H799" stroke="#d2d2d2" stroke-width="1.9"/><path d="M24.9 111V571.5" stroke="#c6c6c6" stroke-width="2"/><path d="M798.2 111V571.5" stroke="#d0d0d0" stroke-width="1.6"/><path d="M26 209.6H218.9M411.6 209.6H604.9" stroke="#4ccf4c" stroke-width="1.3" fill="none"/><path d="M218.9 470.9H411.6M604.9 470.9H797.4" stroke="#3fd63f" stroke-width="2" fill="none"/><path d="M218.9 209.0V471.9M411.6 471.9V209.0M604.9 209.0V471.9" stroke="#30d630" stroke-width="1.7" fill="none"/><path d="M14 103.9H25.4" stroke="#8a6238" stroke-width="1.3"/><path d="M25.4 103.9H410.8" stroke="#7a623f" stroke-width="2" opacity=".92"/><path d="M25.5 100V108M20.4 100.6L24 103.9L20.4 107.2" stroke="#e8882a" stroke-width=".95" fill="none"/><path d="M411.2 100V108M416.8 100.6L413.2 103.9L416.8 107.2M413.4 103.9H421" stroke="#e8882a" stroke-width=".95" fill="none"/><path d="M17.4 199.8V481.8" stroke="#6a4212" stroke-width="2.2"/><path d="M17.5 199.8V481.8" stroke="#d0914c" stroke-width="1"/><path d="M13 209.7H21.4M13.6 205.4L17.2 209.2L20.8 205.4" stroke="#e8882a" stroke-width="1.1" fill="none"/><path d="M13 471.3H21.4M13.6 476L17.2 472L20.8 476" stroke="#e8882a" stroke-width="1.1" fill="none"/></svg>
</div>
<div id="panel"><div class="vsep"></div><div class="topl"></div><span class="t" style="left:10.97px;top:8.00px;font-size:9.6px;line-height:9.6px;color:#111;transform:scaleX(0.8851);">Connect:</span><div class="abs" style="left:48.1px;top:3.8px;width:17.2px;height:18px;border-radius:50%;background:#ff7f00;border:1px solid #a05a14;box-sizing:border-box;"></div><div class="tab" style="left:3.8px;top:24.6px;width:31.8px;height:14.8px;"></div><div class="tab" style="left:71.4px;top:24.6px;width:31.4px;height:14.8px;"></div><div class="tab sel" style="left:35.0px;top:22.0px;width:37.0px;height:18.0px;"></div><div id="tabbody"></div><span class="t" style="left:7.92px;top:27.00px;font-size:9.6px;line-height:9.6px;color:#222;transform:scaleX(0.8642);z-index:3;">DSO</span><span class="t" style="left:40.67px;top:26.00px;font-size:9.6px;line-height:9.6px;color:#111;transform:scaleX(0.9243);z-index:3;">DDS</span><span class="t" style="left:75.21px;top:27.00px;font-size:9.6px;line-height:9.6px;color:#222;transform:scaleX(0.8711);z-index:3;">DMM</span><div class="abs" style="left:4.6px;top:43.6px;width:9.4px;height:10px;box-sizing:border-box;border:1px solid #8e8f8f;border-right-color:#c0c0c0;border-bottom-color:#c0c0c0;background:linear-gradient(135deg,#e4e7eb,#fafafa);"></div><svg width="179" height="520" viewBox="814 74 179 520" style="z-index:4"><path d="M821.2 122 L823.1 125.2 L826.4 119.8" stroke="#3e4f78" stroke-width="1.8" fill="none"/><path d="M885.6 243.3 L891.2 243.3 L888.4 246.8 Z" fill="#111"/><path d="M877.6 323.4 L882.2 323.4 L879.9 320.6 Z M877.6 328.6 L882.2 328.6 L879.9 331.2 Z" fill="#5e6a86"/><path d="M876.2 362.4 L880.8 362.4 L878.5 359.6 Z M876.2 367.4 L880.8 367.4 L878.5 370.2 Z" fill="#5e6a86"/></svg><span class="t" style="left:16.58px;top:44.00px;font-size:9.6px;line-height:9.6px;color:#111;transform:scaleX(0.9256);">On / Off</span><div class="grp" style="left:6.0px;top:62.0px;width:161.0px;height:56.8px;"></div><div class="abs" style="left:8.5px;top:57px;width:46px;height:10px;background:#f0f0f0"></div><span class="t" style="left:10.26px;top:56.00px;font-size:9.6px;line-height:9.6px;color:#111;transform:scaleX(0.8798);">Wave Type</span><div class="radio" style="left:7.5px;top:71.5px"></div><div class="radio on" style="left:48.5px;top:71.5px"></div><div class="radio" style="left:96.3px;top:71.5px"></div><div class="radio" style="left:7.5px;top:99.7px"></div><div class="radio" style="left:48.5px;top:99.7px"></div><span class="t" style="left:24.30px;top:71.00px;font-size:9.6px;line-height:9.6px;color:#111;transform:scaleX(0.9100);">Sine</span><span class="t" style="left:64.20px;top:71.00px;font-size:9.6px;line-height:9.6px;color:#111;transform:scaleX(0.9205);">Square</span><span class="t" style="left:110.11px;top:71.00px;font-size:9.6px;line-height:9.6px;color:#111;transform:scaleX(0.8941);">Trapezia</span><span class="t" style="left:21.72px;top:99.00px;font-size:9.6px;line-height:9.6px;color:#111;transform:scaleX(0.8641);">Ramp</span><span class="t" style="left:67.98px;top:99.00px;font-size:9.6px;line-height:9.6px;color:#111;transform:scaleX(0.9782);">Arb</span><div class="grp" style="left:6.0px;top:135.0px;width:161.0px;height:272.2px;"></div><div class="abs" style="left:8.5px;top:130px;width:42px;height:10px;background:#f0f0f0"></div><span class="t" style="left:9.61px;top:129.00px;font-size:9.6px;line-height:9.6px;color:#111;transform:scaleX(0.8776);">Parameter</span><span class="t" style="left:8.98px;top:146.00px;font-size:9.6px;line-height:9.6px;color:#111;transform:scaleX(0.9158);">Frequency</span><div class="dk" style="left:9.3px;top:163.0px;width:33.7px;height:13.9px;"></div><span class="t" style="left:11.01px;top:165.00px;font-size:11px;line-height:11px;color:#e8861e;transform:scaleX(0.9482);-webkit-text-stroke:0;">1.000</span><div class="combo" style="left:46.3px;top:160.8px;width:34.4px;height:17.6px;"></div><span class="t" style="left:48.71px;top:165.00px;font-size:9.6px;line-height:9.6px;color:#111;transform:scaleX(0.8778);">KHZ</span><span class="t" style="left:94.36px;top:163.00px;font-size:9.6px;line-height:9.6px;color:#111;transform:scaleX(0.9154);">(0 ~ 75MHz)</span><span class="t" style="left:8.18px;top:183.00px;font-size:9.6px;line-height:9.6px;color:#111;transform:scaleX(0.8617);">Amplitude</span><div class="dk" style="left:8.8px;top:202.3px;width:62.4px;height:14.1px;"></div><span class="t" style="left:10.88px;top:204.00px;font-size:11px;line-height:11px;color:#e8861e;transform:scaleX(0.9381);-webkit-text-stroke:0;">2.000</span><span class="t" style="left:76.86px;top:204.00px;font-size:9.6px;line-height:9.6px;color:#111;transform:scaleX(0.9337);">V</span><span class="t" style="left:90.44px;top:204.00px;font-size:9.6px;line-height:9.6px;color:#111;transform:scaleX(0.9408);">(0 ~ 3.5V )</span><span class="t" style="left:8.00px;top:227.00px;font-size:9.6px;line-height:9.6px;color:#111;transform:scaleX(0.9536);">Y Offset</span><div class="dk" style="left:8.8px;top:244.0px;width:49.1px;height:14.2px;"></div><span class="t" style="left:11.00px;top:247.00px;font-size:11px;line-height:11px;color:#e8861e;transform:scaleX(0.9262);-webkit-text-stroke:0;">0.000</span><div class="spin" style="left:59.4px;top:242.8px;width:13.0px;height:9.0px;"></div><div class="spin" style="left:59.4px;top:251.6px;width:13.0px;height:9.0px;"></div><span class="t" style="left:74.76px;top:245.00px;font-size:9.6px;line-height:9.6px;color:#111;">V</span><span class="t" style="left:88.43px;top:245.00px;font-size:9.6px;line-height:9.6px;color:#111;transform:scaleX(0.9651);">(-7  ~ 7V )</span><span class="t" style="left:10.02px;top:265.00px;font-size:9.6px;line-height:9.6px;color:#111;transform:scaleX(0.8613);">Phase</span><div class="dk" style="left:7.1px;top:283.2px;width:48.7px;height:14.1px;"></div><span class="t" style="left:9.31px;top:285.00px;font-size:11px;line-height:11px;color:#e8861e;transform:scaleX(0.9187);-webkit-text-stroke:0;">0.000</span><div class="spin" style="left:57.9px;top:281.8px;width:13.0px;height:8.8px;"></div><div class="spin" style="left:57.9px;top:290.4px;width:13.0px;height:8.8px;"></div><span class="t" style="left:74.25px;top:284.00px;font-size:9.6px;line-height:9.6px;color:#111;transform:scaleX(0.9274);">( 0.0 ~ 1.0)</span><span class="t" style="left:7.54px;top:307.00px;font-size:9.6px;line-height:9.6px;color:#111;transform:scaleX(0.8345);">Duty</span><div class="dk" style="left:7.1px;top:327.0px;width:61.8px;height:13.7px;"></div><span class="t" style="left:9.31px;top:329.00px;font-size:11px;line-height:11px;color:#e8861e;transform:scaleX(0.9187);-webkit-text-stroke:0;">0.500</span><span class="t" style="left:74.25px;top:328.00px;font-size:9.6px;line-height:9.6px;color:#111;transform:scaleX(0.9274);">( 0.0 ~ 1.0)</span></div>
<div id="statusbar"><span class="t" style="left:-0.03px;top:2.00px;font-size:11.6px;line-height:11.6px;color:#000;transform:scaleX(0.9038);">Connected</span><span class="t" style="left:795.28px;top:2.00px;font-size:11.6px;line-height:11.6px;color:#000;transform:scaleX(0.8138);">400.00KSa</span><span class="t" style="left:881.68px;top:2.00px;font-size:11.6px;line-height:11.6px;color:#000;transform:scaleX(0.8996);">26-09-2018</span><span class="t" style="left:941.92px;top:2.00px;font-size:11.6px;line-height:11.6px;color:#000;transform:scaleX(0.8467);">09:57</span>
<div class="abs" style="left:791.5px;top:1px;width:1px;height:13px;background:#d0d0d0"></div>
<svg width="985" height="15" viewBox="0 0 985 15"><g fill="#cdd0d6"><rect x="979" y="11" width="2" height="2"/><rect x="975" y="11" width="2" height="2"/><rect x="979" y="7" width="2" height="2"/><rect x="971" y="11" width="2" height="2"/><rect x="975" y="7" width="2" height="2"/><rect x="979" y="3" width="2" height="2"/></g></svg>
</div>

</body>
</html>
